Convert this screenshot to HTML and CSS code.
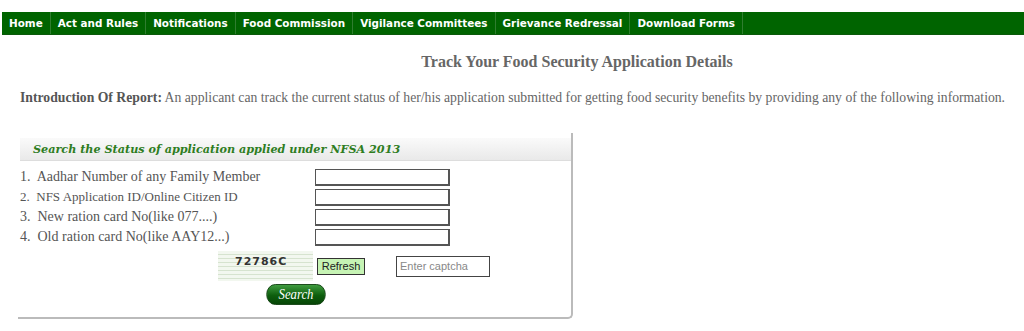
FILE: index.html
```html
<!DOCTYPE html>
<html lang="en">
<head>
    <meta charset="UTF-8">
    <title>Track Your Food Security Application Details</title>
    <link rel="stylesheet" href="styles.css">
</head>
<body>
    <!-- Top menu -->
    <nav class="topnav">
        <a href="#" class="nav-item">Home</a>
        <a href="#" class="nav-item">Act and Rules</a>
        <a href="#" class="nav-item">Notifications</a>
        <a href="#" class="nav-item">Food Commission</a>
        <a href="#" class="nav-item">Vigilance Committees</a>
        <a href="#" class="nav-item">Grievance Redressal</a>
        <a href="#" class="nav-item">Download Forms</a>
    </nav>

    <h2 class="page-title">Track Your Food Security Application Details</h2>

    <p class="intro"><b>Introduction Of Report:</b> An applicant can track the current status of her/his application submitted for getting food security benefits by providing any of the following information.</p>

    <!-- Search panel -->
    <div class="panel">
        <div class="panel-head">Search the Status of application applied under NFSA 2013</div>
        <div class="panel-body">
            <div class="row">
                <label class="lbl">1.&nbsp; Aadhar Number of any Family Member</label>
                <input type="text" class="field">
            </div>
            <div class="row">
                <label class="lbl small">2.&nbsp; NFS Application ID/Online Citizen ID</label>
                <input type="text" class="field">
            </div>
            <div class="row">
                <label class="lbl">3.&nbsp; New ration card No(like 077....)</label>
                <input type="text" class="field">
            </div>
            <div class="row">
                <label class="lbl">4.&nbsp; Old ration card No(like AAY12...)</label>
                <input type="text" class="field">
            </div>
            <div class="captcha-row">
                <div class="captcha">72786C</div>
                <button class="btn-refresh">Refresh</button>
                <input type="text" class="captcha-input" placeholder="Enter captcha">
            </div>
            <div class="search-row">
                <button class="btn-search">Search</button>
            </div>
        </div>
    </div>
</body>
</html>
```

FILE: styles.css
```css
/* General */
* {
    margin: 0;
    padding: 0;
    box-sizing: border-box;
}

body {
    background-color: #fff;
    font-family: 'Liberation Serif', 'Times New Roman', serif;
    color: #555;
}

/* Menu */
.topnav {
    display: flex;
    margin: 12px 0 0 2px;
    height: 23px;
    background-color: #006400;
    border-bottom: 1px solid #0b5a0b;
}

.nav-item {
    display: flex;
    align-items: center;
    padding: 0 7px;
    color: #fff;
    text-decoration: none;
    font-family: 'DejaVu Sans', Verdana, sans-serif;
    font-size: 10.4px;
    font-weight: bold;
    border-right: 1px solid #2f7d2f;
}

/* Title and intro */
.page-title {
    margin-top: 18px;
    padding-left: 130px;
    text-align: center;
    font-size: 16px;
    font-weight: bold;
    color: #666;
}

.intro {
    margin: 19px 0 0 20px;
    font-size: 13.7px;
    color: #666;
}

.intro b {
    color: #555;
}

/* Panel */
.panel {
    width: 555px;
    margin: 27px 0 0 18px;
    padding-top: 5px;
    border-right: 2px solid #bbb;
    border-bottom: 2px solid #bbb;
    border-bottom-right-radius: 5px;
}

.panel-head {
    height: 23px;
    margin-left: 2px;
    padding: 4px 0 0 13px;
    background: linear-gradient(#fafafa, #e9e9e9);
    border-bottom: 1px solid #ddd;
    font-family: 'DejaVu Serif', Georgia, serif;
    font-size: 11.2px;
    font-weight: bold;
    font-style: italic;
    color: #2e7d1f;
}

.panel-body {
    padding: 6px 0 12px 2px;
}

.row {
    display: flex;
    align-items: center;
    height: 20px;
}

.lbl {
    width: 295px;
    font-size: 14px;
    color: #555;
}

.lbl.small {
    font-size: 13px;
}

.field {
    width: 135px;
    height: 17px;
    border: 1px solid #555;
    border-width: 1px 2px 2px 1px;
}

/* Captcha */
.captcha-row {
    display: flex;
    align-items: center;
    margin-top: 4px;
    padding-left: 198px;
}

.captcha {
    width: 95px;
    height: 30px;
    padding: 4px 0 0 17px;
    background: repeating-linear-gradient(#f2f7ef 0, #f2f7ef 3px, #d6e3cf 3px, #d6e3cf 4px);
    font-family: 'DejaVu Sans', Verdana, sans-serif;
    font-size: 11px;
    font-weight: bold;
    letter-spacing: 1px;
    color: #333;
}

.btn-refresh {
    margin-left: 4px;
    width: 48px;
    height: 17px;
    background-color: #c6f3b4;
    border: 1px solid #333;
    font-family: 'Liberation Sans', Arial, sans-serif;
    font-size: 11px;
    color: #222;
}

.captcha-input {
    margin-left: 31px;
    width: 94px;
    height: 21px;
    padding-left: 3px;
    border: 1px solid #444;
    font-family: 'Liberation Sans', Arial, sans-serif;
    font-size: 11px;
}

.captcha-input::placeholder {
    color: #888;
}

.search-row {
    padding: 3px 0 0 241px;
}

.btn-search {
    width: 70px;
    height: 21px;
    border: 1px solid #0a3d0a;
    border-radius: 11px;
    background: linear-gradient(#3f9b3f, #0d5e0d 55%, #064506);
    color: #fff;
    font-family: 'Liberation Serif', serif;
    font-style: italic;
    font-size: 15px;
    transform: scaleX(0.85);
}
```
